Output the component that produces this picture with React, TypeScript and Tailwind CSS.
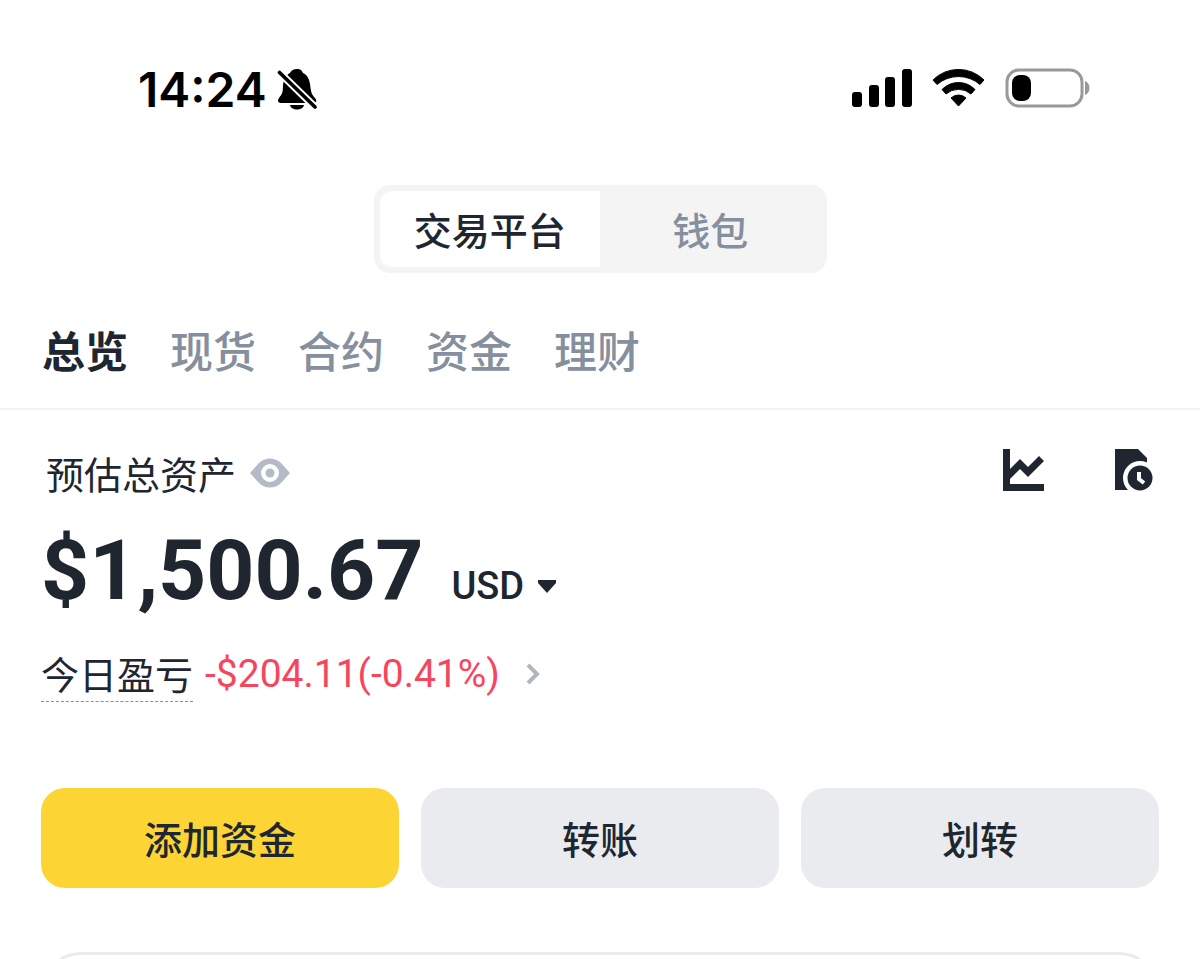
const tabs = ['总览', '现货', '合约', '资金', '理财']

const actions = [
  { label: '添加资金', className: 'bg-[#fcd535]' },
  { label: '转账', className: 'bg-[#eaebef]' },
  { label: '划转', className: 'bg-[#eaebef]' },
]

function BellOffIcon() {
  return (
    <svg width="42" height="42" viewBox="0 0 42 42" aria-hidden="true">
      <path
        d="M20 0C16 0 14 2 13 4C9 6 7 10 6 16C6 24 5 25 2 29C0 32 1 34 5 34H36C40 34 40 31 38 29C34 25 34 22 33 15C32 9 30 6 26 4C25 2 24 0 20 0Z"
        fill="#000"
      />
      <path d="M13 36H27C26 42 14 42 13 36Z" fill="#000" />
      <path d="M0 1L41 41" stroke="#fff" strokeWidth="7.5" />
      <path d="M2.5 3.5L38 38" stroke="#000" strokeWidth="3.6" strokeLinecap="round" />
    </svg>
  )
}

function SignalIcon() {
  return (
    <svg width="60" height="38" viewBox="0 0 60 38" aria-hidden="true">
      <rect x="0" y="23" width="10" height="15" rx="3" />
      <rect x="17" y="16" width="10" height="22" rx="3" />
      <rect x="33" y="8" width="10" height="30" rx="3" />
      <rect x="50" y="0" width="10" height="38" rx="3" />
    </svg>
  )
}

function WifiIcon() {
  return (
    <svg width="53" height="38" viewBox="0 0 53 38" aria-hidden="true">
      <g stroke="#000" strokeWidth="1" strokeLinejoin="round">
        <path d="M1 11A36 36 0 0 1 52 11L48 15.5A33 33 0 0 0 5 15.5Z" />
        <path d="M10 20.5A23 23 0 0 1 43 20.5L39 25A19 19 0 0 0 14 25Z" />
        <path d="M19 29A11 11 0 0 1 34 29L26.5 37Z" />
      </g>
    </svg>
  )
}

function BatteryIcon() {
  return (
    <svg width="86" height="40" viewBox="0 0 86 40" aria-hidden="true">
      <rect x="2" y="2" width="75" height="36" rx="12" fill="none" stroke="#999" strokeWidth="3" />
      <rect x="7" y="7" width="19" height="26" rx="8" />
      <path d="M80 13C86 15 86 25 80 27Z" fill="#999" />
    </svg>
  )
}

function EyeIcon() {
  return (
    <svg width="40" height="30" viewBox="0 0 40 30" aria-hidden="true">
      <path
        fillRule="evenodd"
        d="M0 15L9 5C15 -1 25 -1 31 5L40 15L31 25C25 31 15 31 9 25ZM20 6A9 9 0 1 0 20 24A9 9 0 1 0 20 6Z"
        fill="#b4bbc7"
      />
      <circle cx="20" cy="15" r="4.5" fill="#b4bbc7" />
    </svg>
  )
}

function ChartIcon() {
  return (
    <svg width="42" height="42" viewBox="0 0 42 42" fill="#202630" aria-hidden="true">
      <path d="M0 0H7V35H41V42H0Z" />
      <path d="M7 20L17 10L25 18L36 7L41 12L25 28L17 20L7 30Z" />
    </svg>
  )
}

function HistoryIcon() {
  return (
    <svg width="38" height="42" viewBox="0 0 38 42" fill="#202630" aria-hidden="true">
      <path d="M0 0H23L32 9V41H0Z" />
      <circle cx="25" cy="29" r="17" fill="#fff" />
      <circle cx="25" cy="29" r="12.5" />
      <path d="M24 23V30L29 34" fill="none" stroke="#fff" strokeWidth="4" />
    </svg>
  )
}

function StatusBar() {
  return (
    <div className="flex h-[60px] items-start justify-between pt-2 pr-[109px] pl-[138px]">
      <div className="flex items-center gap-[10px]">
        <span className="font-[Inter,sans-serif] text-[48px] leading-[44px] font-semibold text-black">14:24</span>
        <BellOffIcon />
      </div>
      <div className="flex items-center gap-5">
        <SignalIcon />
        <WifiIcon />
        <BatteryIcon />
      </div>
    </div>
  )
}

export default function App() {
  return (
    <div className="flex min-h-screen flex-col bg-white pt-[60px] font-['Noto_Sans_CJK_SC',sans-serif] text-[#202630]">
      <StatusBar />

      <div className="mx-auto mt-[65px] flex h-[88px] w-[453px] rounded-2xl bg-[#f4f4f4] p-[6px] text-[38px] font-medium">
        <button type="button" className="flex-1 rounded-l-xl bg-white leading-none">
          交易平台
        </button>
        <button type="button" className="flex-1 leading-none text-[#858f9e]">
          钱包
        </button>
      </div>

      <nav className="flex gap-[42px] border-b-2 border-[#f4f4f5] px-[42px] pt-11 pb-[27px] text-[43px] leading-[64px]">
        {tabs.map((tab, i) => (
          <a key={tab} href="#" className={i === 0 ? 'font-bold' : 'font-medium text-[#858f9e]'}>
            {tab}
          </a>
        ))}
      </nav>

      <main className="flex flex-1 flex-col px-[41px] pt-[39px]">
        <div className="flex items-start justify-between pr-[6px] pl-[5px]">
          <div className="flex items-center gap-[14px]">
            <h1 className="text-[38px] leading-[48px]">预估总资产</h1>
            <button type="button" aria-label="隐藏资产">
              <EyeIcon />
            </button>
          </div>
          <div className="flex items-center gap-[70px]">
            <button type="button" aria-label="资产走势">
              <ChartIcon />
            </button>
            <button type="button" aria-label="历史记录">
              <HistoryIcon />
            </button>
          </div>
        </div>

        <div className="mt-6 flex items-baseline gap-7 font-[Roboto,sans-serif]">
          <span className="text-[84px] leading-[100px] font-bold">$1,500.67</span>
          <div className="flex items-center gap-[14px]">
            <select aria-label="币种" className="appearance-none bg-transparent text-[38px] leading-[44px] font-medium">
              <option>USD</option>
            </select>
            <svg width="18" height="13" viewBox="0 0 18 13" fill="#202630" aria-hidden="true">
              <path d="M0 0H18V3L9 13L0 3Z" />
            </svg>
          </div>
        </div>

        <div className="mt-6 flex items-end gap-3">
          <a href="#" className="border-b border-dashed border-[#858f9e] text-[38px] leading-[56px]">
            今日盈亏
          </a>
          <div className="flex items-center gap-[26px]">
            <span className="font-[Roboto,sans-serif] text-[39px] leading-[56px] text-[#f6465d]">
              -$204.11(-0.41%)
            </span>
            <button type="button" aria-label="查看盈亏">
              <svg
                width="14"
                height="22"
                viewBox="0 0 14 22"
                fill="none"
                stroke="#b0b6be"
                strokeWidth="4"
                aria-hidden="true"
              >
                <path d="M2 2L11 11L2 20" />
              </svg>
            </button>
          </div>
        </div>

        <div className="mt-[86px] grid grid-cols-3 gap-[22px]">
          {actions.map((action) => (
            <button
              key={action.label}
              type="button"
              className={`h-[100px] rounded-3xl text-[38px] leading-none font-medium ${action.className}`}
            >
              {action.label}
            </button>
          ))}
        </div>

        {/* only the top edge of the next card shows above the fold */}
        <div className="mt-16 min-h-1 flex-1 basis-0 overflow-hidden">
          <div className="h-24 rounded-t-[40px] border-3 border-[#eaebef]" />
        </div>
      </main>
    </div>
  )
}
